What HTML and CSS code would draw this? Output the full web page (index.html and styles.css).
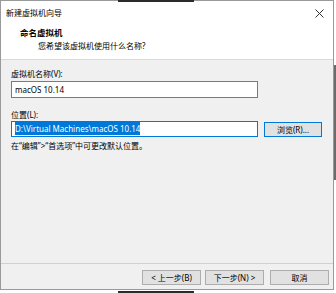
FILE: index.html
```html
<!DOCTYPE html>
<html lang="zh-CN">
<head>
    <meta charset="UTF-8">
    <meta name="viewport" content="width=device-width, initial-scale=1.0">
    <title>新建虚拟机向导</title>

    <link rel="stylesheet" href="styles.css">
</head>
<body>
    <div class="behind behind-top"></div>
    <div class="behind behind-bottom"></div>
    <div class="behind behind-right"></div>

    <div class="window">
        <div class="titlebar">
            <span class="title">新建虚拟机向导</span>
            <svg class="close" width="9" height="9" viewBox="0 0 9 9">
                <path d="M0.5 0.5 L8.5 8.5 M8.5 0.5 L0.5 8.5" stroke="#333" stroke-width="1" fill="none"/>
            </svg>
        </div>

        <div class="header">
            <div class="header-title">命名虚拟机</div>
            <div class="header-sub">您希望该虚拟机使用什么名称?</div>
        </div>

        <div class="content">
            <div class="label">虚拟机名称(V):</div>
            <div class="field">macOS 10.14</div>

            <div class="label label-loc">位置(L):</div>
            <div class="loc-row">
                <div class="field focused"><span class="selected">D:\Virtual Machines\macOS 10.14</span></div>
                <div class="btn btn-default">浏览(R)...</div>
            </div>
            <div class="hint">在“编辑”&gt;“首选项”中可更改默认位置。</div>
        </div>

        <div class="footer">
            <div class="btn btn-nav">&lt; 上一步(B)</div>
            <div class="btn btn-nav">下一步(N) &gt;</div>
            <div class="btn btn-nav btn-cancel">取消</div>
        </div>
    </div>
</body>
</html>
```

FILE: styles.css
```css
body {
    margin: 0;
    background-color: #ffffff;
    font-family: "Noto Sans", "Noto Sans CJK SC", sans-serif;
    font-size: 8px;
    color: #000;
}

/* things from the desktop behind the dialog */
.behind {
    position: absolute;
    background-color: #2b2b2f;
    z-index: 2;
}
.behind-top {
    left: 118px;
    top: 0;
    width: 76px;
    height: 2px;
}
.behind-bottom {
    left: 118px;
    top: 291px;
    width: 76px;
    height: 2px;
}
.behind-right {
    left: 334px;
    top: 65px;
    width: 2px;
    height: 115px;
    background-color: #6b6b6b;
}

.window {
    width: 334px;
    height: 290px;
    box-sizing: border-box;
    border: 1px solid #9a9a9a;
    background-color: #f0f0f0;
    display: flex;
    flex-direction: column;
}

.titlebar {
    height: 24px;
    background-color: #fff;
    display: flex;
    align-items: center;
    justify-content: space-between;
    padding: 0 9px 0 5px;
}
.title {
    line-height: 12px;
}
.close {
    display: block;
}

.header {
    height: 35px;
    background-color: #fff;
    border-bottom: 1px solid #d9d9d9;
    padding: 1px 0 0 19px;
    box-sizing: border-box;
    line-height: 13px;
}
.header-title {
    font-weight: bold;
    font-size: 8.5px;
}
.header-sub {
    padding-left: 18px;
}

.content {
    flex: 1;
    padding: 7px 0 0 10px;
}
.label {
    line-height: 13px;
}
.label-loc {
    margin-top: 10px;
}
.field {
    width: 247px;
    height: 17px;
    box-sizing: border-box;
    margin-top: 1px;
    background-color: #fff;
    border: 1px solid #7a7a7a;
    padding: 0 0 0 3px;
    line-height: 15px;
}
.focused {
    border-color: #0078d7;
    height: 16px;
    line-height: 14px;
    margin-top: 0;
}
.selected {
    background-color: #0078d7;
    color: #fff;
    padding: 1px 0;
}

.loc-row {
    display: flex;
    align-items: flex-start;
    gap: 6px;
}
.btn {
    box-sizing: border-box;
    background-color: #e1e1e1;
    border: 1px solid #adadad;
    text-align: center;
    line-height: 13px;
}
.btn-default {
    width: 58px;
    height: 15px;
    margin-top: 1px;
    border-color: #0078d7;
}

.hint {
    margin-top: 2px;
    line-height: 13px;
}

.footer {
    height: 26px;
    box-sizing: border-box;
    border-top: 1px solid #d0d0d0;
    display: flex;
    justify-content: flex-end;
    gap: 4px;
    padding: 6px 4px 0 0;
}
.btn-nav {
    width: 59px;
    height: 15px;
}
.btn-cancel {
    margin-left: 2px;
}
```
